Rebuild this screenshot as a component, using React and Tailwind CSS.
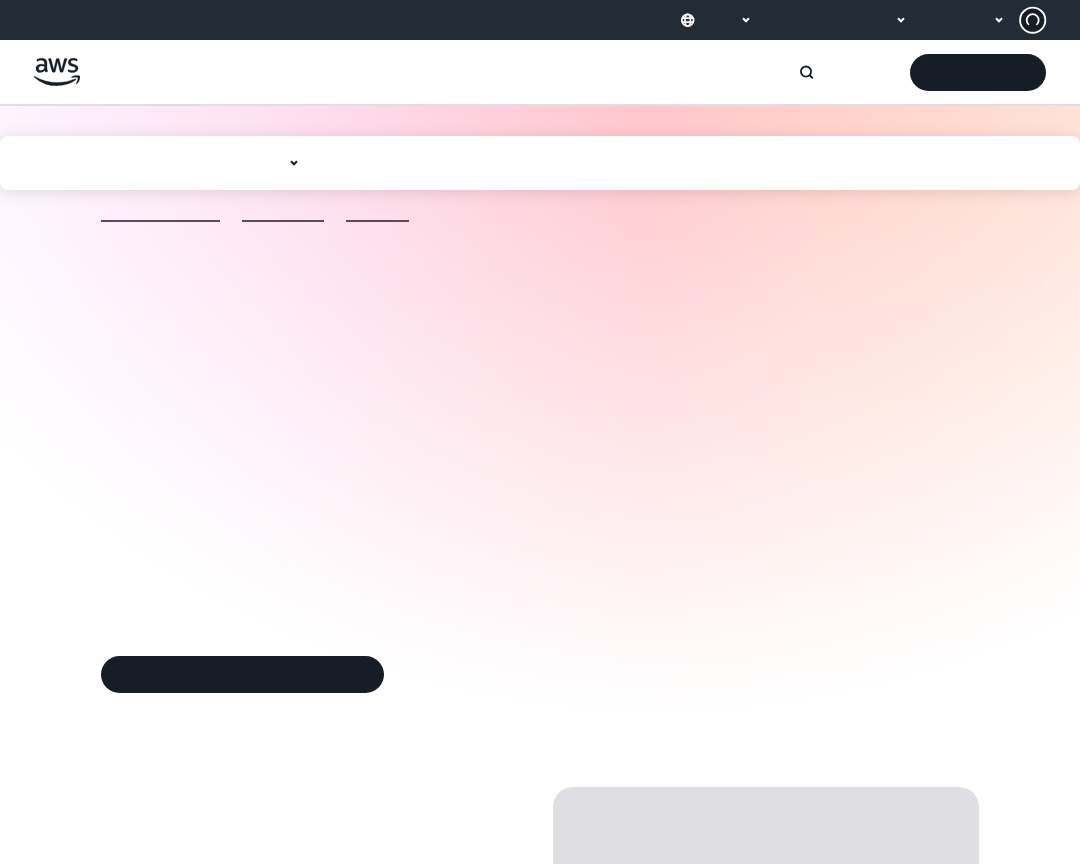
import { FaAws } from "react-icons/fa6";

function Chevron({ className = "" }) {
  return (
    <svg viewBox="0 0 8 6" className={"h-[6px] w-2 shrink-0 " + className} fill="none" stroke="currentColor" strokeWidth="2" aria-hidden="true">
      <path d="M1 1.3 L4 4.3 L7 1.3" />
    </svg>
  );
}

function Globe() {
  return (
    <svg viewBox="0 0 14 14" className="size-[14px]" fill="none" stroke="currentColor" strokeWidth="1.7" aria-hidden="true">
      <circle cx="6.7" cy="7.2" r="5.9" />
      <ellipse cx="6.7" cy="7.2" rx="2.7" ry="5.9" />
      <path d="M1 5.2h11.4M1 9.2h11.4" />
    </svg>
  );
}

function SearchIcon() {
  return (
    <svg viewBox="0 0 14 14" className="size-[14px]" fill="none" stroke="currentColor" strokeWidth="1.8" aria-hidden="true">
      <circle cx="6" cy="6.6" r="5.1" />
      <path d="M9.4 10 L12.8 13.4" />
    </svg>
  );
}

function Avatar() {
  return (
    <svg viewBox="0 0 28 28" className="size-7" fill="none" stroke="#fff" aria-hidden="true">
      <circle cx="13.7" cy="14.2" r="12.6" fill="#161d26" strokeWidth="1.9" />
      <path d="M10 18.9 A6 6 0 1 1 17.4 18.9" strokeWidth="1.8" />
    </svg>
  );
}

const crumbs = [
  { label: "Products", width: "w-[119px]" },
  { label: "Category", width: "w-[82px]" },
  { label: "Service", width: "w-[63px]" },
];

export default function App() {
  return (
    <div className="flex min-h-screen flex-col bg-white font-['Open_Sans',sans-serif] text-[#161d26]">
      <div className="flex h-10 items-center justify-end bg-[#232b37] pr-[33px] text-white">
        <button aria-label="Language" className="flex w-[69px] items-center justify-between">
          <Globe />
          <Chevron />
        </button>
        <button aria-label="Support" className="flex w-[155px] justify-end">
          <Chevron />
        </button>
        <button aria-label="My account" className="flex w-[98px] justify-end">
          <Chevron />
        </button>
        <button aria-label="Profile" className="ml-4">
          <Avatar />
        </button>
      </div>

      <header className="flex h-[66px] items-center border-b-2 border-[#dedee3] pr-[34px] pl-[34px]">
        <a href="#home" aria-label="AWS home">
          <FaAws className="h-[38px] w-[46px]" stroke="currentColor" strokeWidth="4" />
        </a>
        <button aria-label="Search" className="mr-24 ml-auto">
          <SearchIcon />
        </button>
        <button aria-label="Create account" className="h-[37px] w-[136px] rounded-full bg-[#161d26]" />
      </header>

      <main className="flex flex-1 flex-col bg-[radial-gradient(circle_940px_at_61%_-333px,rgba(255,255,255,0)_36%,#fff),linear-gradient(90deg,#fbdcff_0%,#fed3e9_28%,#ffc7cd_60%,#ffcfc9_75%,#ffd3c4_100%)] pt-[30px]">
        <nav aria-label="Page sections" className="flex h-[54px] items-center rounded-lg bg-white px-[101px] shadow-[0_2px_16px_rgba(0,0,0,0.12)]">
          <button aria-label="More sections" className="flex w-[197px] justify-end">
            <Chevron />
          </button>
        </nav>

        <nav aria-label="Breadcrumb" className="flex h-8 gap-[22px] px-[101px]">
          {crumbs.map((c) => (
            <a key={c.label} href="#products" aria-label={c.label} className={"border-b-2 border-[#5c4a5c] " + c.width} />
          ))}
        </nav>

        <div className="px-[101px] pt-[434px]">
          <a href="#start" aria-label="Get started" className="block h-[37px] w-[283px] rounded-full bg-[#161d26]" />
        </div>

        <section aria-label="Media" className="mt-[94px] grid min-h-[77px] flex-1 grid-cols-2 gap-[26px] px-[101px]">
          <div className="col-start-2 rounded-t-[20px] bg-[#dedee3]" />
        </section>
      </main>
    </div>
  );
}
